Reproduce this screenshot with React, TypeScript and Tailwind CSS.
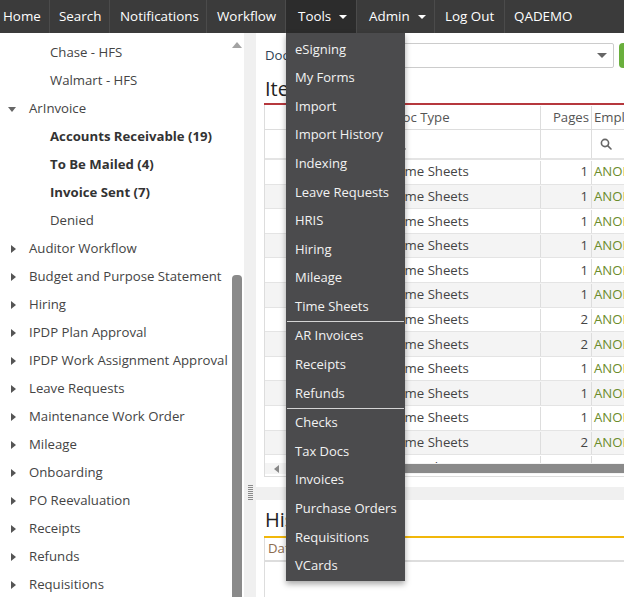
import React from 'react';

const navItems = [
  { label: 'Home', w: 'w-[50px] pl-[3px]' },
  { label: 'Search', w: 'w-[60px] pl-[9px]' },
  { label: 'Notifications', w: 'w-[97px] pl-[10px]' },
  { label: 'Workflow', w: 'w-[79px] pl-[10px]' },
  { label: 'Tools', w: 'w-[71px] pl-[12px]', caret: true, active: true },
  { label: 'Admin', w: 'w-[78px] pl-[12px]', caret: true },
  { label: 'Log Out', w: 'w-[70px] pl-[10px]' },
  { label: 'QADEMO', w: 'flex-1 pl-[9px]', last: true },
];

type TreeNode = { label: string; kind: 'child' | 'open' | 'closed'; bold?: boolean };

const tree: TreeNode[] = [
  { label: 'Chase - HFS', kind: 'child' },
  { label: 'Walmart - HFS', kind: 'child' },
  { label: 'ArInvoice', kind: 'open' },
  { label: 'Accounts Receivable (19)', kind: 'child', bold: true },
  { label: 'To Be Mailed (4)', kind: 'child', bold: true },
  { label: 'Invoice Sent (7)', kind: 'child', bold: true },
  { label: 'Denied', kind: 'child' },
  { label: 'Auditor Workflow', kind: 'closed' },
  { label: 'Budget and Purpose Statement', kind: 'closed' },
  { label: 'Hiring', kind: 'closed' },
  { label: 'IPDP Plan Approval', kind: 'closed' },
  { label: 'IPDP Work Assignment Approval', kind: 'closed' },
  { label: 'Leave Requests', kind: 'closed' },
  { label: 'Maintenance Work Order', kind: 'closed' },
  { label: 'Mileage', kind: 'closed' },
  { label: 'Onboarding', kind: 'closed' },
  { label: 'PO Reevaluation', kind: 'closed' },
  { label: 'Receipts', kind: 'closed' },
  { label: 'Refunds', kind: 'closed' },
  { label: 'Requisitions', kind: 'closed' },
];

const menuGroups = [
  ['eSigning', 'My Forms', 'Import', 'Import History', 'Indexing', 'Leave Requests', 'HRIS', 'Hiring', 'Mileage', 'Time Sheets'],
  ['AR Invoices', 'Receipts', 'Refunds'],
  ['Checks', 'Tax Docs', 'Invoices', 'Purchase Orders', 'Requisitions', 'VCards'],
];

const pages = [1, 1, 1, 1, 1, 1, 2, 2, 1, 1, 1, 2, 1];

const cols = 'grid grid-cols-[122px_154px_51px_120px]';

const SearchIcon = () => (
  <svg width="12" height="12" viewBox="0 0 12 12" fill="none" stroke="#666" strokeWidth="1.6">
    <circle cx="5" cy="5" r="3.6" />
    <path d="M7.6 7.6 L11 11" strokeLinecap="round" />
  </svg>
);

const App: React.FC = () => {
  return (
    <div className="relative w-[624px] h-[597px] overflow-hidden bg-white font-['Open_Sans','Liberation_Sans',sans-serif] text-[13.2px] text-[#333]">
      {/* Top nav */}
      <nav className="flex h-[33px] bg-[#3b3b3b] text-white text-[13.4px]">
        {navItems.map((item) => (
          <div
            key={item.label}
            className={`${item.w} flex items-center h-full ${item.last ? '' : 'border-r border-[#4b4b4b]'} ${item.active ? 'bg-[#2c2c2c]' : ''}`}
          >
            <span>{item.label}</span>
            {item.caret && (
              <span className="ml-[8px] w-0 h-0 border-l-[4px] border-r-[4px] border-t-[4px] border-l-transparent border-r-transparent border-t-white" />
            )}
          </div>
        ))}
      </nav>

      <div className="flex h-[564px]">
        {/* Left tree */}
        <aside className="flex w-[244px] h-full">
          <div className="w-[232px] h-full overflow-hidden pt-[6px]">
            {tree.map((n) => (
              <div key={n.label} className="flex items-center h-[28px] whitespace-nowrap">
                {n.kind === 'child' ? (
                  <span className="w-[50px] shrink-0" />
                ) : (
                  <span className="w-[29px] shrink-0 flex items-center">
                    {n.kind === 'closed' ? (
                      <span className="ml-[11px] w-0 h-0 border-t-[4px] border-b-[4px] border-l-[5px] border-t-transparent border-b-transparent border-l-[#555]" />
                    ) : (
                      <span className="ml-[8px] w-0 h-0 border-l-[4.5px] border-r-[4.5px] border-t-[5px] border-l-transparent border-r-transparent border-t-[#666]" />
                    )}
                  </span>
                )}
                <span className={n.bold ? 'font-bold text-[#333]' : 'text-[#444]'}>{n.label}</span>
              </div>
            ))}
          </div>
          <div className="w-[12px] h-full flex flex-col items-start">
            <span className="mt-[9px] w-0 h-0 border-l-[5px] border-r-[5px] border-b-[6px] border-l-transparent border-r-transparent border-b-[#a3a3a3]" />
            <div className="mt-[227px] w-[10px] flex-1 rounded-t-[4px] bg-[#8a8a8a]" />
          </div>
        </aside>

        {/* Vertical splitter */}
        <div className="w-[12px] h-full bg-[#f0f0f0] flex flex-col items-center">
          <div className="mt-[452px] w-[5px] h-[15px] bg-[repeating-linear-gradient(to_bottom,#8a8a8a_0_1px,transparent_1px_2px)]" />
        </div>

        {/* Main */}
        <main className="flex-1 flex flex-col h-full min-w-0">
          <section className="h-[454px] pl-[8px] pt-[10px] flex flex-col overflow-hidden">
            <div className="flex items-center h-[25px]">
              <span className="w-[91px] pl-[1px] text-[#2e3f55]">Doc</span>
              <div className="flex-1 h-full border border-[#ccc] rounded-[2px] flex items-center justify-end pr-[6px]">
                <span className="w-0 h-0 border-l-[5px] border-r-[5px] border-t-[5px] border-l-transparent border-r-transparent border-t-[#666]" />
              </div>
              <div className="ml-[5px] w-[12px] h-full rounded-l-[4px] bg-[#6aaf3d] -mr-[7px]" />
            </div>
            <div className="h-[35px] flex items-end pb-[4px] pl-[1px] text-[20px] text-[#222] leading-none">Items</div>
            <div className="h-[2px] bg-[#b6383d]" />
            <div className="border-l border-b border-[#ddd] flex flex-col overflow-hidden h-[372px]">
              <div className={`${cols} h-[25px] pt-[1px] border-b border-[#ddd] text-[#555]`}>
                <div className="border-r border-[#ddd]" />
                <div className="border-r border-[#ddd] flex items-center pl-[6px]">Doc Type</div>
                <div className="border-r border-[#ddd] flex items-center justify-end pr-[2px]">Pages</div>
                <div className="flex items-center pl-[2px]">Employee</div>
              </div>
              <div className={`${cols} h-[30px] border-b-2 border-[#e4e4e4]`}>
                <div className="border-r border-[#ddd]" />
                <div className="border-r border-[#ddd] flex items-center pl-[7px]"><SearchIcon /></div>
                <div className="border-r border-[#ddd]" />
                <div className="flex items-center pl-[8px]"><SearchIcon /></div>
              </div>
              <div className="h-[303px] overflow-hidden">
                {pages.map((p, i) => (
                  <div
                    key={i}
                    className={`${cols} h-[24.6px] pt-[1px] border-b border-[#e4e4e4] ${i % 2 === 1 ? 'bg-[#f4f4f4]' : 'bg-white'}`}
                  >
                    <div className="border-r border-[#ddd]" />
                    <div className="border-r border-[#ddd] flex items-center pl-[7px] text-[#444]">Time Sheets</div>
                    <div className="border-r border-[#ddd] flex items-center justify-end pr-[3px] text-[#444]">{p}</div>
                    <div className="flex items-center pl-[2px] text-[#6b8c2a]">ANONYMOUS</div>
                  </div>
                ))}
              </div>
              <div className="h-[11px] flex items-center bg-[#f4f4f4]">
                <span className="ml-[9px] w-0 h-0 border-t-[4px] border-b-[4px] border-r-[5px] border-t-transparent border-b-transparent border-r-[#888]" />
                <div className="ml-[14px] flex-1 h-[9px] bg-[#8a8a8a]" />
              </div>
              <div className="flex-1 bg-white" />
            </div>
          </section>

          {/* Horizontal splitter */}
          <div className="h-[13px] bg-[#f0f0f0]" />

          <section className="flex-1 pl-[8px] flex flex-col overflow-hidden">
            <div className="h-[36px] flex items-end pb-[6px] pl-[1px] text-[20px] text-[#222] leading-none">History</div>
            <div className="h-[2px] bg-[#f1b70a]" />
            <div className="h-[24px] border-l border-b-2 border-[#ddd] flex items-center pl-[3px] text-[#8c6d4f]">Date</div>
            <div className="flex-1 border-l border-[#ddd]" />
          </section>
        </main>
      </div>

      {/* Tools dropdown menu */}
      <div className="absolute left-[286px] top-[33px] w-[119px] bg-[#4b4b4d] pt-[2px] pb-[1px] shadow-[0_3px_6px_rgba(0,0,0,0.35)] text-[#f2f2f2] text-[13px]">
        {menuGroups.map((group, gi) => (
          <div key={gi} className={gi > 0 ? 'border-t border-[#d4d4d4] mx-[1px]' : ''}>
            {group.map((label) => (
              <div key={label} className={`h-[28.6px] flex items-center whitespace-nowrap ${gi > 0 ? 'pl-[8px]' : 'pl-[9px]'}`}>
                {label}
              </div>
            ))}
          </div>
        ))}
      </div>
    </div>
  );
};

export default App;
